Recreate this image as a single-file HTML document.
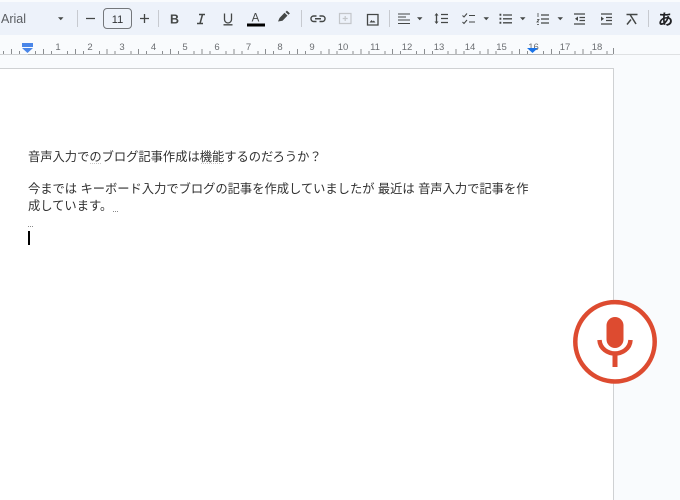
<!DOCTYPE html>
<html lang="ja"><head><meta charset="utf-8"><style>
html,body{margin:0;padding:0;width:680px;height:500px;overflow:hidden}
body{background:#f9fbfd;position:relative;font-family:"Liberation Sans","Noto Sans CJK JP",sans-serif}
.tb{position:absolute;left:0;top:2px;width:680px;height:33px;background:#edf2fa}
.page{position:absolute;left:-2px;top:68px;width:615px;height:432px;background:#fff;border:1px solid #cfd1d3;border-width:1px 1px 0 0}
.t{position:absolute;left:28px;font-size:12.27px;line-height:17px;color:#2f2f2f;white-space:nowrap;font-family:"Liberation Sans","Noto Sans CJK JP",sans-serif}
svg{position:absolute;left:0;top:0}
</style></head><body>
<div class="tb"></div>
<div class="page"></div>
<svg width="680" height="70" viewBox="0 0 680 70" font-family="Liberation Sans, sans-serif">
<!-- toolbar -->
<text x="1" y="23" font-size="12.5" fill="#5a5d61">Arial</text>
<path d="M58 17.300h5.500l-2.750 2.900z" fill="#444746"/>
<path d="M77.500 10v17M158.500 10v17M301.500 10v17M389.500 10v17M648.500 10v17" stroke="#c7cad0"/>
<path d="M86 18.500h9M140 18.500h9M144.500 14v9" stroke="#444746" stroke-width="1.300" fill="none"/>
<rect x="103.500" y="8.500" width="28" height="20" rx="3.500" fill="none" stroke="#74777b"/>
<text x="117.500" y="23" font-size="11" fill="#303235" text-anchor="middle">11</text>
<text x="174.500" y="23.500" font-size="12.500" font-weight="700" fill="#444746" text-anchor="middle">B</text>
<path d="M199 14.500h6M197 23.500h6M202.500 14.500l-2.500 9" stroke="#444746" stroke-width="1.500" fill="none"/>
<path d="M224.500 13.500v6a3.500 3.500 0 0 0 7 0v-6M223.500 24.800h9" stroke="#444746" stroke-width="1.300" fill="none"/>
<text x="255.500" y="21.500" font-size="11.500" fill="#444746" text-anchor="middle">A</text>
<rect x="247" y="23.500" width="18" height="3" fill="#000"/>
<path d="M278 21.500l1.500-3.500 5-5.200 3 2.800-5 5.200zM285.500 12l3 2.800 1.400-1.400-3-2.800z" fill="#444746"/>
<g fill="none" stroke="#444746" stroke-width="1.300">
<path d="M316.500 16h-2.800a2.600 2.600 0 0 0 0 5.500h2.800M319.500 16h2.800a2.600 2.600 0 0 1 0 5.500h-2.800M315 18.750h6" stroke-width="1.400"/>
<path d="M339.500 13.500h11.500v10h-11.500zM345.200 16v5M342.700 18.500h5" stroke="#c3c6ca" stroke-width="1.200"/>
<path d="M367.500 14.500h10.500v10.500h-10.500z" stroke-width="1.300"/>
<path d="M398 14h12M398 17h8M398 20h12M398 23.500h12" stroke-width="1.100"/>
<path d="M441 14.500h7M441 18.500h7M441 22.500h7M436.500 15v7" stroke-width="1.300"/>
<path d="M462.500 15.500l1.500 1.500 3-3.500M462.500 22l1.500 1.500 3-3.500M469 15.500h6M469 22h6" stroke-width="1.100"/>
<path d="M503 15h9M503 18.800h9M503 22.800h9" stroke-width="1.300"/>
<path d="M541 15h8M541 19h8M541 23h8" stroke-width="1.300"/>
<path d="M574 14h11M579.500 17.500h5.500M579.500 20.500h5.500M574 24h11" stroke-width="1.200"/>
<path d="M601 14h11M606 17.500h6M606 20.500h6M601 24h11" stroke-width="1.200"/>
<path d="M626.500 14.500h11M630 14.500l6 9.500M627 24.500l4-5" stroke-width="1.500"/>
<path d="M538 13v4M537 19.500h2l-2 2.500h2M537 24.500h2" stroke-width=".8"/>
</g>
<path d="M369.500 22.500l2-2.500 1.300 1.500 1-1 1.700 2z" fill="#444746"/>
<path d="M436.500 13l2 2.500h-4zM436.500 24l2-2.500h-4z" fill="#444746"/>
<path d="M499.500 13.800h1.800v2h-1.800zM499.500 17.800h1.800v2h-1.800zM499.500 21.800h1.800v2h-1.800z" fill="#444746"/>
<path d="M578 16.500v4.500l-3-2.250z" fill="#444746"/>
<path d="M601 16.500v4.500l3-2.250z" fill="#444746"/>
<path d="M417 17.300h5.500l-2.750 2.900zM483.500 17.300h5.500l-2.750 2.900zM520 17.300h5.500l-2.750 2.900zM557.500 17.300h5.500l-2.750 2.900z" fill="#444746"/>
<text x="665.500" y="24.500" font-size="15" font-weight="700" fill="#202124" text-anchor="middle" font-family="Liberation Sans, Noto Sans CJK JP, sans-serif">あ</text>
<!-- ruler -->
<path d="M0 54.500h28" stroke="#d0d2d4"/>
<path d="M28 54.500h585" stroke="#b4b6b8"/>
<path d="M613 54.500h67" stroke="#dfe1e3"/>
<path d="M3.500 51v3M11.500 49v5M19.500 51v3M35.500 51v3M43.500 49v5M51.500 51v3M67.500 51v3M75.500 49v5M83.500 51v3M99.500 51v3M107 49v5M115 51v3M131 51v3M138.500 49v5M146.500 51v3M162.500 51v3M170.500 49v5M178.500 51v3M194 51v3M202 49v5M210 51v3M226 51v3M234 49v5M242 51v3M258 51v3M265.500 49v5M273.500 51v3M289.500 51v3M297.500 49v5M305.500 51v3M321 51v3M329 49v5M337 51v3M353 51v3M361 49v5M369 51v3M385 51v3M392.500 49v5M400.500 51v3M416.500 51v3M424.500 49v5M432.500 51v3M448 51v3M456 49v5M464 51v3M480 51v3M488 49v5M496 51v3M512 51v3M519.500 49v5M527.500 51v3M543.500 51v3M551.500 49v5M559.500 51v3M575 51v3M583 49v5M591 51v3M607 51v3M613.500 48v6" stroke="#8a8d90" fill="none"/>
<g font-size="9.500" fill="#6b6e72" text-anchor="middle">
<text x="58" y="50">1</text><text x="90" y="50">2</text><text x="122" y="50">3</text><text x="153.500" y="50">4</text><text x="185" y="50">5</text><text x="217" y="50">6</text><text x="248.500" y="50">7</text><text x="280" y="50">8</text><text x="312" y="50">9</text><text x="343" y="50">10</text><text x="375" y="50">11</text><text x="407" y="50">12</text><text x="439" y="50">13</text><text x="470" y="50">14</text><text x="501.500" y="50">15</text><text x="533.500" y="50">16</text><text x="565" y="50">17</text><text x="597" y="50">18</text>
</g>
<path d="M22 43h11v4h-11zM22 48h11l-5.500 5z" fill="#4a86e8"/>
<path d="M527 48h11l-5.500 5z" fill="#1a73e8"/>
</svg>
<div class="t" style="top:149px">音声入力でのブログ記事作成は機能するのだろうか？</div>
<div class="t" style="top:181px">今までは キーボード入力でブログの記事を作成していましたが 最近は 音声入力で記事を作</div>
<div class="t" style="top:198px">成しています。</div>
<svg width="680" height="500" viewBox="0 0 680 500">
<path d="M113 211.500h6M28 226.500h5" stroke="#8a8a8a" stroke-dasharray="1 1"/>
<path d="M90 163.500h12M201 163.500h22" stroke="#c8c8c8" stroke-dasharray="1 1"/>
<rect x="28" y="231" width="2" height="14" fill="#000"/>
<circle cx="615" cy="341.800" r="39.700" fill="#fff" stroke="#dd4b30" stroke-width="4.500"/>
<rect x="606.500" y="317" width="17" height="31" rx="8.500" fill="#dd4b30"/>
<path d="M599.500 340C600 349 608 353.500 615 353.500C622 353.500 630 349 630.500 340" fill="none" stroke="#dd4b30" stroke-width="4.500"/>
<path d="M615 353v14" fill="none" stroke="#dd4b30" stroke-width="5"/>
</svg>
</body></html>
